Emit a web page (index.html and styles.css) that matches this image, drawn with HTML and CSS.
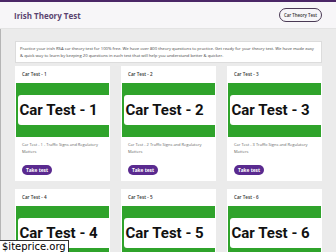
FILE: index.html
```html
<!DOCTYPE html>
<html lang="en">
<head>
    <meta charset="UTF-8">
    <meta name="viewport" content="width=device-width, initial-scale=1.0">
    <title>Irish Theory Test</title>
    <link rel="stylesheet" href="styles.css">
</head>
<body>
    <header class="site-header">
        <h1 class="brand">Irish Theory Test</h1>
        <a class="outline-btn" href="#">Car Theory Test</a>
    </header>

    <main class="page">
        <p class="intro">Practice your irish RSA car theory test for 100% free. We have over 800 theory questions to practice. Get ready for your theory test. We have made easy &amp; quick way to learn by keeping 20 questions in each test that will help you understand better &amp; quicker.</p>

        <div class="tests">
            <div class="card">
                <div class="card-title">Car Test - 1</div>
                <div class="thumb"><div class="thumb-label">Car Test - 1</div></div>
                <p class="desc">Car Test - 1 - Traffic Signs and Regulatory Matters</p>
                <a class="take-btn" href="#">Take test</a>
            </div>
            <div class="card">
                <div class="card-title">Car Test - 2</div>
                <div class="thumb"><div class="thumb-label">Car Test - 2</div></div>
                <p class="desc">Car Test - 2 Traffic Signs and Regulatory Matters</p>
                <a class="take-btn" href="#">Take test</a>
            </div>
            <div class="card">
                <div class="card-title">Car Test - 3</div>
                <div class="thumb"><div class="thumb-label">Car Test - 3</div></div>
                <p class="desc">Car Test - 3 Traffic Signs and Regulatory Matters</p>
                <a class="take-btn" href="#">Take test</a>
            </div>
            <div class="card">
                <div class="card-title">Car Test - 4</div>
                <div class="thumb"><div class="thumb-label">Car Test - 4</div></div>
            </div>
            <div class="card">
                <div class="card-title">Car Test - 5</div>
                <div class="thumb"><div class="thumb-label">Car Test - 5</div></div>
            </div>
            <div class="card">
                <div class="card-title">Car Test - 6</div>
                <div class="thumb"><div class="thumb-label">Car Test - 6</div></div>
            </div>
        </div>
    </main>

    <div class="watermark">$iteprice.org</div>
</body>
</html>
```

FILE: styles.css
```css
body {
    margin: 0;
    font-family: 'Open Sans', sans-serif;
    background-color: #ebebeb;
    border-top: 2px solid #4b2767;
    overflow: hidden;
    height: 250px;
}

.site-header {
    display: flex;
    justify-content: space-between;
    align-items: center;
    height: 26px;
    padding: 0 14px;
    background-color: #f7f6f8;
    border-bottom: 1px solid #e3e3e3;
}

.brand {
    margin: 0;
    font-size: 8px;
    font-weight: 700;
    color: #5b4470;
}

.outline-btn {
    padding: 3px 4px;
    border: 1px solid #4a3a55;
    border-radius: 8px;
    font-size: 4.4px;
    font-weight: 600;
    color: #333;
    text-decoration: none;
}

.page {
    padding: 12px 14px 0 14px;
    border-left: 1px solid #b5b5b5;
}

.intro {
    margin: 0;
    padding: 3px 4px;
    background-color: #fff;
    border: 1px solid #dcdcdc;
    font-size: 4.2px;
    line-height: 7px;
    color: #444;
}

.tests {
    display: grid;
    grid-template-columns: repeat(3, 1fr);
    column-gap: 11px;
    row-gap: 8px;
    margin-top: 3px;
}

.card {
    background-color: #fff;
    padding-bottom: 4px;
}

.card-title {
    height: 17px;
    line-height: 17px;
    padding-left: 7px;
    font-size: 4.6px;
    font-weight: 600;
    color: #333;
}

.thumb {
    height: 54px;
    margin: 0 1px;
    padding-top: 12px;
    box-sizing: border-box;
    background-color: #2fa32b;
}

.thumb-label {
    display: flex;
    align-items: center;
    height: 30px;
    margin-left: 1.5px;
    padding-left: 2px;
    background-color: #fff;
    border-radius: 3px 0 0 3px;
    font-family: Roboto, sans-serif;
    font-size: 15px;
    font-weight: 700;
    color: #111;
}

.desc {
    margin: 4px 0 0 0;
    padding: 0 5px 0 7px;
    font-size: 4px;
    line-height: 7px;
    color: #666;
}

.take-btn {
    display: inline-block;
    margin: 4px 0 0 7px;
    width: 30px;
    height: 10px;
    line-height: 10px;
    text-align: center;
    border-radius: 5px;
    background-color: #5a2a8f;
    color: #fff;
    font-size: 4.8px;
    font-weight: 700;
    text-decoration: none;
}

.watermark {
    position: absolute;
    left: 0;
    bottom: 0;
    padding: 0 2px;
    background-color: #fff;
    border: 1px solid #333;
    border-left: none;
    border-bottom: none;
    font-family: 'DejaVu Sans', sans-serif;
    font-size: 10px;
    line-height: 11px;
    color: #000;
}
```
